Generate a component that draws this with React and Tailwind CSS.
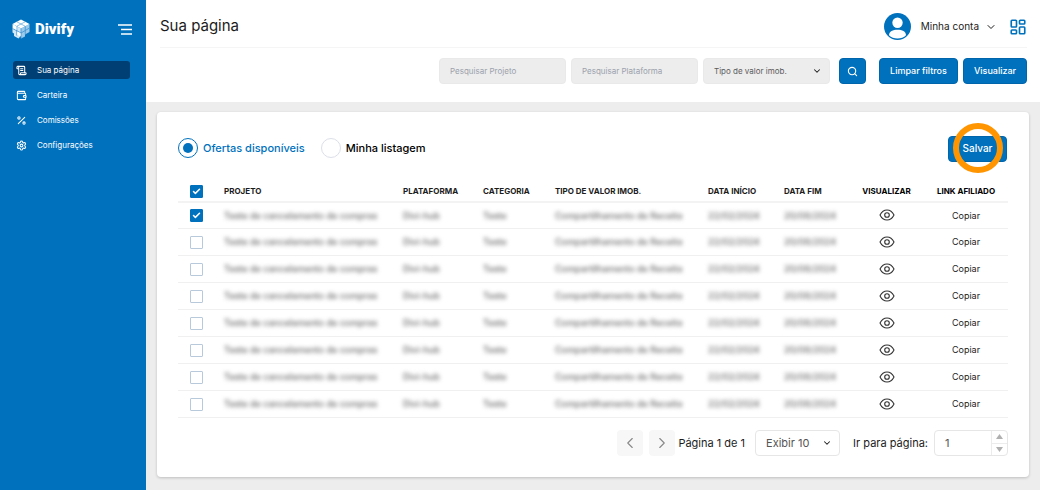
import { useState } from "react";
import { ScrollText, Wallet, Percent, Settings, Search, ChevronDown, ChevronLeft, ChevronRight, Check, LayoutDashboard } from "lucide-react";

const NAV = [
  { label: "Sua página", Icon: ScrollText, active: true },
  { label: "Carteira", Icon: Wallet },
  { label: "Comissões", Icon: Percent },
  { label: "Configurações", Icon: Settings },
];

const ROWS = Array.from({ length: 8 }, (_, i) => ({
  id: i,
  projeto: "Teste de cancelamento de compras",
  plataforma: "Divi-hub",
  categoria: "Teste",
  tipo: "Compartilhamento de Receita",
  inicio: "22/02/2024",
  fim: "20/08/2024",
}));

function CubeLogo() {
  return (
    <svg className="h-5 w-[18px] shrink-0" viewBox="0 0 36 40" aria-hidden="true">
      <path d="M1 10 18 19 18 33 13 39 4 34 4 29 1 27Z" fill="#d3e8f7" />
      <path d="M18 19 35 10 35 26 26 31 26 35 18 39Z" fill="#9ccaeb" />
      <path d="M18 1 35 10 18 19 1 10Z" fill="#ffffff" />
      <path d="M9.5 5.5 26.5 14.5M26.5 5.5 9.5 14.5" stroke="#6fb0df" strokeWidth="1.6" />
      <path d="M1 19 18 28 35 18M9.5 14.5V33M26.5 14.5V31M18 19V39" stroke="#3d93d2" strokeWidth="1.6" fill="none" />
      <path d="M2 11 9 15 9 22 2 18Z" fill="#ffffff" />
      <path d="M10.500 25 17 28.500 17 35 10.500 31.500Z" fill="#ffffff" />
    </svg>
  );
}

function Tick({ label, defaultChecked }) {
  return (
    <label className="grid h-[13px] w-[13px]">
      <input
        type="checkbox"
        aria-label={label}
        defaultChecked={defaultChecked}
        className="peer col-start-1 row-start-1 h-[13px] w-[13px] appearance-none rounded-[1px] border border-[#b9c9dc] bg-white checked:border-[#0071bd] checked:bg-[#0071bd]"
      />
      <Check className="pointer-events-none invisible col-start-1 row-start-1 size-[9px] place-self-center text-white peer-checked:visible" strokeWidth={4} />
    </label>
  );
}

function Choice({ label, checked, onChange }) {
  return (
    <label className="flex items-center gap-[5px]">
      <span className="grid size-5">
        <input
          type="radio"
          name="lista"
          checked={checked}
          onChange={onChange}
          className="peer col-start-1 row-start-1 size-5 appearance-none rounded-full border border-[#dcdfe8] checked:border-[#0071bd]"
        />
        <span className="pointer-events-none invisible col-start-1 row-start-1 size-[10px] place-self-center rounded-full bg-[#0071bd] peer-checked:visible" />
      </span>
      <span className={checked ? "text-[#0071bd]" : "text-black"}>{label}</span>
    </label>
  );
}

export default function App() {
  const [lista, setLista] = useState("ofertas");
  const [pagina, setPagina] = useState(1);
  const field = "h-[26px] w-[127px] rounded bg-[#ededed] px-[10px] text-[8px] border border-[#e9e9e9]";
  const blue = "h-[26px] rounded bg-[#0071bd] text-white border border-[#0065ab]";
  const blurred = "inline-block font-medium blur-[2px] text-[#666]";

  return (
    <div className="flex min-h-screen bg-[#ededed] font-['Inter',sans-serif] text-[#1c1c1c]">
      <aside className="w-[146px] shrink-0 bg-[#0071bd] text-white">
        <div className="flex items-center justify-between pl-3 pr-[14px] pt-[19px]">
          <a href="#" className="flex items-center gap-[5px]">
            <CubeLogo />
            <span className="font-['Roboto',sans-serif] text-[15px] leading-5 font-black">Divify</span>
          </a>
          <button type="button" aria-label="Recolher menu" className="flex">
            <svg className="h-[11px] w-[14px]" viewBox="0 0 14 11" stroke="currentColor" strokeWidth="1.400" aria-hidden="true">
              <path d="M0 1H14M3 5.500H14M3 10H14" />
            </svg>
          </button>
        </div>
        <nav className="mt-[22px] flex flex-col gap-[7px] pl-[13px] pr-4">
          {NAV.map(({ label, Icon, active }) => (
            <a key={label} href="#" className={`flex h-[18px] items-center gap-[10px] rounded-[3px] pl-[3px] text-[8px] ${active ? "bg-[#003f74]" : ""}`}>
              <Icon className="size-[11px]" strokeWidth={2.2} />
              {label}
            </a>
          ))}
        </nav>
      </aside>

      <div className="flex min-w-0 flex-1 flex-col">
        <header className="h-[102px] bg-white pl-[14px] pr-[13px]">
          <div className="flex h-12 items-center justify-between border-b border-[#f5f5f5] pt-[6px]">
            <h1 className="text-[15px]">Sua página</h1>
            <div className="flex items-center">
              <button type="button" className="flex items-center gap-[10px] text-[10px]">
                <svg className="size-[27px]" viewBox="0 0 27 27" aria-hidden="true">
                  <circle cx="13.500" cy="13.500" r="13.500" fill="#0071bd" />
                  <circle cx="13.500" cy="9.800" r="5.200" fill="#fff" />
                  <path d="M5 22.200C5 18.600 9 16.800 13.500 16.800S22 18.600 22 22.200C19.800 24.300 16.900 25.500 13.500 25.500S7.200 24.300 5 22.200Z" fill="#fff" />
                </svg>
                <span>Minha conta</span>
                <ChevronDown className="-ml-1 size-3" strokeWidth={2} />
              </button>
              <button type="button" aria-label="Aplicativos" className="ml-3 text-[#0071bd]">
                <LayoutDashboard className="size-[18px]" strokeWidth={2.2} />
              </button>
            </div>
          </div>
          <form className="flex items-center justify-end gap-[5px] pt-[10px]" onSubmit={(e) => e.preventDefault()}>
            <input aria-label="Pesquisar Projeto" placeholder="Pesquisar Projeto" className={`${field} placeholder:text-[#9ba1ac]`} />
            <input aria-label="Pesquisar Plataforma" placeholder="Pesquisar Plataforma" className={`${field} placeholder:text-[#9ba1ac]`} />
            <span className="grid">
              <select aria-label="Tipo de valor imob." className={`${field} col-start-1 row-start-1 appearance-none text-[#5c5c5c]`}>
                <option>Tipo de valor imob.</option>
              </select>
              <ChevronDown className="pointer-events-none col-start-1 row-start-1 mr-2 size-[10px] self-center justify-self-end" strokeWidth={2.5} />
            </span>
            <button type="submit" aria-label="Pesquisar" className={`${blue} ml-1 mr-2 flex w-[27px] items-center justify-center`}>
              <Search className="size-[11px]" strokeWidth={2.4} />
            </button>
            <button type="reset" className={`${blue} w-[79px] text-[9px] font-medium`}>Limpar filtros</button>
            <button type="button" className={`${blue} w-16 text-[9px] font-medium`}>Visualizar</button>
          </form>
        </header>

        <main className="mx-[11px] my-[10px] rounded bg-white px-[21px] pb-[21px] pt-[22px] shadow-[0_1px_3px_rgba(0,0,0,0.2)]">
          <div className="flex items-center justify-between">
            <div className="flex gap-4 text-[11px] font-medium">
              <Choice label="Ofertas disponíveis" checked={lista === "ofertas"} onChange={() => setLista("ofertas")} />
              <Choice label="Minha listagem" checked={lista === "minha"} onChange={() => setLista("minha")} />
            </div>
            <div className="relative mr-px">
              <button type="button" className={`${blue} w-[59px] text-[10px] font-medium`}>Salvar</button>
              <span className="pointer-events-none absolute left-1/2 top-1/2 size-[50px] -translate-x-1/2 -translate-y-1/2 rounded-full border-[6px] border-[#ff9500]" />
            </div>
          </div>

          <table className="mt-5 w-full table-fixed text-left text-[9px]">
            <colgroup>
              <col className="w-[46px]" />
              <col />
              <col className="w-20" />
              <col className="w-[72px]" />
              <col className="w-[153px]" />
              <col className="w-[76px]" />
              <col className="w-[65px]" />
              <col className="w-[75px]" />
              <col className="w-[84px]" />
            </colgroup>
            <thead>
              <tr className="h-5 border-b-2 border-[#f3f3f3] text-[8px]">
                <th className="pl-3"><Tick label="Selecionar todas" defaultChecked /></th>
                <th>PROJETO</th>
                <th>PLATAFORMA</th>
                <th>CATEGORIA</th>
                <th>TIPO DE VALOR IMOB.</th>
                <th>DATA INÍCIO</th>
                <th>DATA FIM</th>
                <th className="text-center text-black">VISUALIZAR</th>
                <th className="text-center text-black">LINK AFILIADO</th>
              </tr>
            </thead>
            <tbody>
              {ROWS.map((r) => (
                <tr key={r.id} className="h-[27px] border-b border-[#f0f0f0] whitespace-nowrap">
                  <td className="pl-3"><Tick label={`Selecionar oferta ${r.id + 1}`} defaultChecked={r.id === 0} /></td>
                  <td><span className={blurred}>{r.projeto}</span></td>
                  <td><span className={blurred}>{r.plataforma}</span></td>
                  <td><span className={blurred}>{r.categoria}</span></td>
                  <td><span className={blurred}>{r.tipo}</span></td>
                  <td><span className={blurred}>{r.inicio}</span></td>
                  <td><span className={blurred}>{r.fim}</span></td>
                  <td>
                    <button type="button" aria-label="Visualizar oferta" className="mx-auto flex text-[#333]">
                      <svg className="h-3 w-4" viewBox="0 0 16 12" fill="none" stroke="currentColor" strokeWidth="1.100" aria-hidden="true">
                        <path d="M1 6C2.600 2.800 5 1 8 1S13.400 2.800 15 6C13.400 9.200 11 11 8 11S2.600 9.200 1 6Z" strokeLinejoin="round" />
                        <circle cx="8" cy="6" r="2.300" />
                      </svg>
                    </button>
                  </td>
                  <td className="text-center"><button type="button">Copiar</button></td>
                </tr>
              ))}
            </tbody>
          </table>

          <div className="mt-3 flex items-center justify-end text-[11px]">
            <button type="button" aria-label="Página anterior" className="mr-[6px] flex size-[26px] items-center justify-center rounded bg-[#f7f7f7] text-[#888]">
              <ChevronLeft className="size-[18px]" strokeWidth={1.500} />
            </button>
            <button type="button" aria-label="Próxima página" className="flex size-[26px] items-center justify-center rounded bg-[#f7f7f7] text-[#888]">
              <ChevronRight className="size-[18px]" strokeWidth={1.500} />
            </button>
            <span className="ml-[3px] mr-[10px]">Página 1 de 1</span>
            <span className="mr-[13px] grid">
              <select aria-label="Itens por página" className="col-start-1 row-start-1 h-[26px] w-[85px] appearance-none rounded border border-[#e6e6e6] px-[10px] text-[#555]">
                <option>Exibir 10</option>
              </select>
              <ChevronDown className="pointer-events-none col-start-1 row-start-1 mr-2 size-[10px] self-center justify-self-end" strokeWidth={2.5} />
            </span>
            <label htmlFor="pagina" className="mr-[6px]">Ir para página:</label>
            <div className="flex h-[26px] w-[74px] overflow-hidden rounded border border-[#e6e6e6]">
              <input id="pagina" inputMode="numeric" value={pagina} onChange={(e) => setPagina(Number(e.target.value) || 1)} className="min-w-0 flex-1 px-[10px] text-[#555]" />
              <div className="flex w-4 flex-col divide-y divide-[#ececec] border-l border-[#ececec] text-[#b0b0b0]">
                <button type="button" aria-label="Aumentar" onClick={() => setPagina(pagina + 1)} className="flex flex-1 items-center justify-center">
                  <svg className="h-[5px] w-[7px]" viewBox="0 0 7 5" fill="currentColor"><path d="M3.500 0 7 5H0Z" /></svg>
                </button>
                <button type="button" aria-label="Diminuir" onClick={() => setPagina(Math.max(1, pagina - 1))} className="flex flex-1 items-center justify-center">
                  <svg className="h-[5px] w-[7px]" viewBox="0 0 7 5" fill="currentColor"><path d="M3.500 5 7 0H0Z" /></svg>
                </button>
              </div>
            </div>
          </div>
        </main>
      </div>
    </div>
  );
}
